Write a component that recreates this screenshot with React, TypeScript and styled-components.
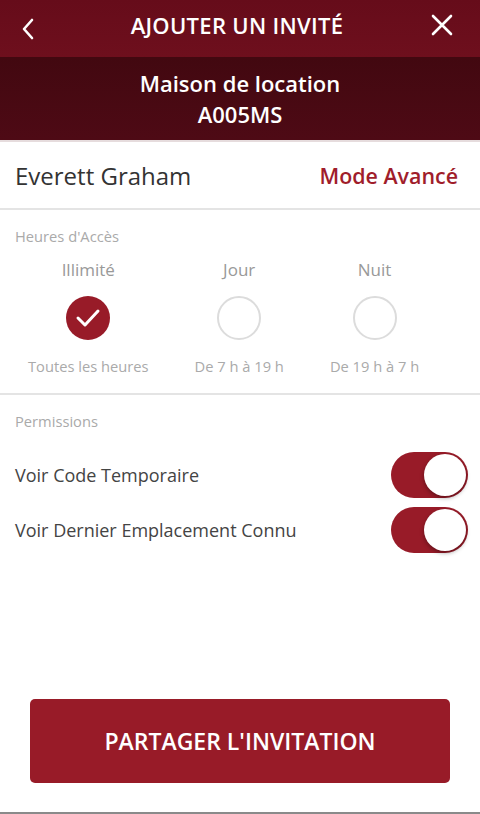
import React from 'react'
import styled, { createGlobalStyle } from 'styled-components'

const GlobalStyle = createGlobalStyle`
    html, body {
        margin: 0;
        padding: 0;
        background: #fff;
    }
    body {
        font-family: 'Open Sans', 'Noto Sans', sans-serif;
    }
`

const Screen = styled.div`
    width: 480px;
    height: 814px;
    display: flex;
    flex-direction: column;
    background: #fff;
    border-bottom: 2px solid #8a8a8a;
    box-sizing: border-box;
    overflow: hidden;
`

const TopBar = styled.div`
    height: 57px;
    display: flex;
    align-items: center;
    justify-content: space-between;
    padding: 0 24px 0 14px;
    background: linear-gradient(180deg, #660c1a 0%, #6e0f1d 100%);
    color: #fff;
`

const IconButton = styled.div`
    width: 28px;
    height: 28px;
    display: flex;
    align-items: center;
    justify-content: center;
`

const Title = styled.div`
    font-size: 22px;
    font-weight: 600;
    letter-spacing: 0.3px;
    margin-top: -7px;
    margin-left: 4px;
`

const SubHeader = styled.div`
    height: 83px;
    display: flex;
    flex-direction: column;
    align-items: center;
    justify-content: center;
    background: linear-gradient(180deg, #420810 0%, #4e0a15 100%);
    color: #fff;
    font-size: 22px;
    font-weight: 600;
    line-height: 31px;
    border-bottom: 2px solid #e6dcdd;
`

const NameRow = styled.div`
    height: 66px;
    display: flex;
    align-items: center;
    justify-content: space-between;
    padding: 0 22px 0 15px;
    border-bottom: 2px solid #e4e4e4;
`

const Name = styled.div`
    font-size: 24px;
    color: #333;
`

const ModeLink = styled.div`
    font-size: 21.4px;
    font-weight: 600;
    color: #a01d2b;
`

const Section = styled.div<{ $border?: boolean }>`
    display: flex;
    flex-direction: column;
    padding: 16px 0 0 15px;
    border-bottom: ${(p) => (p.$border ? '2px solid #e4e4e4' : 'none')};
`

const SectionLabel = styled.div`
    font-size: 14.7px;
    color: #aaa;
    line-height: 20px;
`

const Options = styled.div`
    display: flex;
    gap: 46px;
    padding: 13px 0 17px 13px;
`

const Option = styled.div`
    display: flex;
    flex-direction: column;
    align-items: center;
`

const OptionTitle = styled.div`
    font-size: 17px;
    color: #999;
    line-height: 22px;
`

const Radio = styled.div<{ $checked?: boolean }>`
    width: 44px;
    height: 44px;
    margin: 15px 0 16px;
    border-radius: 50%;
    box-sizing: border-box;
    display: flex;
    align-items: center;
    justify-content: center;
    background: ${(p) => (p.$checked ? '#981b28' : '#fff')};
    border: ${(p) => (p.$checked ? 'none' : '2px solid #dcdcdc')};
`

const OptionSub = styled.div`
    font-size: 14.7px;
    color: #aaa;
    line-height: 20px;
`

const PermRow = styled.div`
    display: flex;
    align-items: center;
    justify-content: space-between;
    height: 55px;
    padding-right: 12px;
`

const PermLabel = styled.div`
    font-size: 18px;
    color: #444;
`

const Toggle = styled.div`
    width: 77px;
    height: 46px;
    border-radius: 23px;
    background: #981b28;
    display: flex;
    align-items: center;
    justify-content: flex-end;
    box-sizing: border-box;
    padding: 2px;
`

const Knob = styled.div`
    width: 42px;
    height: 42px;
    border-radius: 50%;
    background: #fff;
    box-shadow: 0 2px 4px rgba(0, 0, 0, 0.35);
`

const PermGap = styled.div`
    height: 16px;
`

const Spacer = styled.div`
    flex: 1;
`

const Footer = styled.div`
    padding: 0 30px 29px;
`

const ShareButton = styled.div`
    height: 84px;
    border-radius: 5px;
    background: #981b28;
    color: #fff;
    font-size: 23px;
    font-weight: 600;
    display: flex;
    align-items: center;
    justify-content: center;
`

const hours = [
    { title: 'Illimité', sub: 'Toutes les heures', checked: true },
    { title: 'Jour', sub: 'De 7 h à 19 h', checked: false },
    { title: 'Nuit', sub: 'De 19 h à 7 h', checked: false },
]

const permissions = ['Voir Code Temporaire', 'Voir Dernier Emplacement Connu']

export default function App(): JSX.Element {
    return (
        <>
            <GlobalStyle />
            <Screen>
                <TopBar>
                    <IconButton>
                        <svg width="16" height="26" viewBox="0 0 16 26">
                            <path d="M12 4 L4 13 L12 22" fill="none" stroke="#fff" strokeWidth="2.6" strokeLinecap="round" strokeLinejoin="round" />
                        </svg>
                    </IconButton>
                    <Title>AJOUTER UN INVITÉ</Title>
                    <IconButton>
                        <svg width="24" height="24" viewBox="0 0 24 24" style={{ marginTop: -8 }}>
                            <path d="M3 3 L21 21 M21 3 L3 21" stroke="#fff" strokeWidth="2.6" strokeLinecap="round" />
                        </svg>
                    </IconButton>
                </TopBar>
                <SubHeader>
                    <div>Maison de location</div>
                    <div>A005MS</div>
                </SubHeader>
                <NameRow>
                    <Name>Everett Graham</Name>
                    <ModeLink>Mode Avancé</ModeLink>
                </NameRow>
                <Section $border>
                    <SectionLabel>Heures d'Accès</SectionLabel>
                    <Options>
                        {hours.map((h) => (
                            <Option key={h.title}>
                                <OptionTitle>{h.title}</OptionTitle>
                                <Radio $checked={h.checked}>
                                    {h.checked && (
                                        <svg width="26" height="20" viewBox="0 0 26 20">
                                            <path d="M3 10 L10 17 L23 3" fill="none" stroke="#fff" strokeWidth="3" strokeLinecap="round" strokeLinejoin="round" />
                                        </svg>
                                    )}
                                </Radio>
                                <OptionSub>{h.sub}</OptionSub>
                            </Option>
                        ))}
                    </Options>
                </Section>
                <Section>
                    <SectionLabel>Permissions</SectionLabel>
                    <PermGap />
                    {permissions.map((p) => (
                        <PermRow key={p}>
                            <PermLabel>{p}</PermLabel>
                            <Toggle>
                                <Knob />
                            </Toggle>
                        </PermRow>
                    ))}
                </Section>
                <Spacer />
                <Footer>
                    <ShareButton>PARTAGER L'INVITATION</ShareButton>
                </Footer>
            </Screen>
        </>
    )
}
